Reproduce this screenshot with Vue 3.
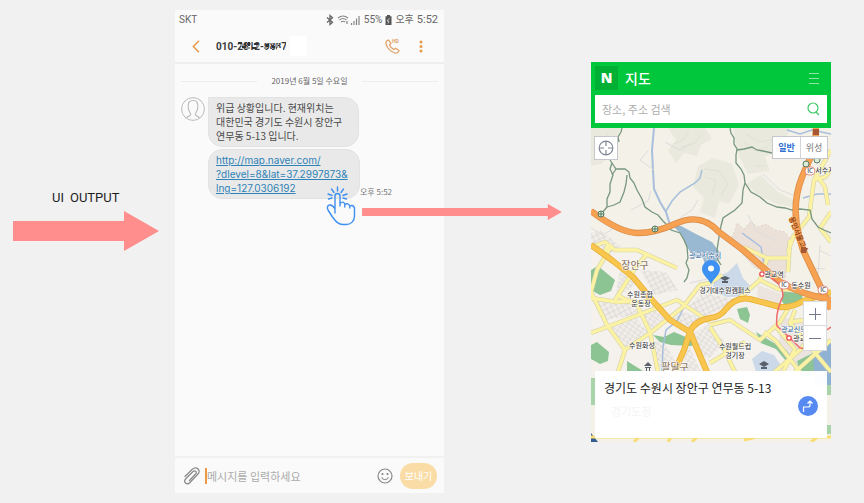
<script setup>
import { ref } from 'vue'

const draft = ref('')
const query = ref('')
const mapType = ref('normal')

const trails = [
  'M622 128 L621 132 L618 137 L619 142',
  'M610 160 L612 163 L616 169 L625 169 L629 172 L630 178 L634 183 L637 190 L642 199 L645 207 L652 212 L658 215 L663 221 L667 225 L671 230 L680 233 L684 240 L687 247 L688 258 L686 263 L689 270 L687 278 L684 282',
  'M612 163 L610 169 L613 175 L610 184 L610 192 L607 199 L607 207 L602 213',
  'M627 175 L626 184 L624 192 L620 202 L614 205 L607 207',
  'M612 175 L616 169',
  'M730 128 L731 133 L734 138 L734 144 L737 149 L736 155 L736 163 L741 169 L744 175 L745 183 L743 190 L742 203 L735 210 L723 218 L721 226 L719 237 L717 250 L718 260 L721 265',
  'M737 150 L744 149 L752 147 L757 150 L763 151 L772 153',
  'M745 183 L751 192 L760 197 L767 203 L777 207 L785 208 L792 210 L800 209 L810 210 L812 219 L818 227 L824 230 L831 233'
]

const localRoads = [
  'M612 245 L597 270 L591 292 L607 325 L625 350 L618 372',
  'M591 247 L605 242 L615 250 L637 250 L677 268',
  'M613 262 L605 251 L608 245',
  'M648 253 L636 267 L615 300',
  'M591 298 L617 302 L635 301 L650 332 L658 372',
  'M591 333 L607 327 L638 315 L677 300 L710 322',
  'M617 295 L638 306 L653 297',
  'M623 351 L650 333 L683 307 L700 285 L710 283 L722 275',
  'M743 247 L767 258 L790 258',
  'M790 240 L788 272',
  'M767 259 L760 280 L737 300',
  'M760 280 L778 289 L790 290',
  'M710 327 L724 349 L735 372',
  'M710 325 L730 320 L760 340 L780 322 L788 309',
  'M710 363 L745 342',
  'M764 332 L775 340 L800 372',
  'M776 327 L795 349 L783 372',
  'M790 322 L812 319 M795 310 L790 323 L831 372',
  'M831 340 L795 372 M771 375 L800 350 L820 325',
  'M831 150 L814 180 L809 217 L793 237 L788 252',
  'M812 169 L825 187 L828 205 M814 180 L825 177 L831 170',
  'M831 212 L820 228 L831 242'
]

const mainRoads = 'M591 245 L613 261 L633 277 L652 300 L670 320 L690 332 L707 372 M674 373 L684 350 L690 332 Q694 321 710 318 Q720 317 725 310 Q736 296 750 299 L780 307 Q792 308 803 301 L831 292'

const highways = [
  'M591 211 Q620 233 638 233 Q655 233 675 224 C692 216 706 218 719 232 L743 250 L775 278 Q792 292 831 300',
  'M816 128 L815 147 L802 177 Q791 205 799 236 L803 250 L823 292 L831 309'
]

const fineRoads = [
  'M654 170 L640 160 L648 151 M665 142 L680 150 L690 144',
  'M631 210 L648 201 L651 191 M680 218 L692 210 L698 200',
  'M763 174 L780 190 L793 195 M748 215 L756 231 L776 241',
  'M591 228 L603 235 L614 228 M690 283 L707 279',
  'M819 250 L831 256 M809 268 L825 269 M820 245 L818 275'
]

const places = [
  { text: '장안구', x: 635, y: 269, kind: 'district' },
  { text: '팔달구', x: 675, y: 371, kind: 'district' },
  { text: '수원종합', x: 640, y: 297, kind: 'place' },
  { text: '운동장', x: 641, y: 306, kind: 'place' },
  { text: '수원화성', x: 642, y: 348, kind: 'place' },
  { text: '광교저수지', x: 705, y: 258, kind: 'lake' },
  { text: '경기대수원캠퍼스', x: 725, y: 293, kind: 'place' },
  { text: '광교역', x: 774, y: 277, kind: 'place' },
  { text: '동수원', x: 801, y: 288, kind: 'place' },
  { text: '서수지', x: 825, y: 173, kind: 'place' },
  { text: '수원월드컵', x: 735, y: 349, kind: 'place' },
  { text: '경기장', x: 735, y: 358, kind: 'place' },
  { text: '광교신도시', x: 797, y: 332, kind: 'lake' },
  { text: '광교중앙', x: 806, y: 341, kind: 'place' }
]

const interchanges = [
  { x: 810, y: 171 },
  { x: 784, y: 285 },
  { x: 823, y: 290 }
]
</script>

<template>
  <main class="board">
    <section class="output">
      <p class="caption"><span>UI</span><span>OUTPUT</span></p>
      <svg class="big-arrow" viewBox="0 0 146 40" aria-hidden="true">
        <path d="M0 10 H111 V0 L146 20 L111 40 V30 H0 Z" fill="#ff8e8c" />
      </svg>
    </section>

    <section class="phone">
      <div class="status">
        <span>SKT</span>
        <span class="status-right">
          <svg width="8" height="12" viewBox="0 0 8 12" fill="none" stroke="#666" stroke-width="1.3"><path d="M1 3.5 L6.5 8.3 L4 10.5 V1.5 L6.5 3.7 L1 8.5" /></svg>
          <svg class="signal" width="24" height="12" viewBox="0 0 24 12" fill="none" stroke="#858585">
            <path d="M1 4 Q6 0 11 4 M2.5 6 Q6 3 9.5 6 M4 8 Q6 6.5 8 8" stroke-width="1.2" />
            <path d="M10 7 V10 M14.5 9 V11 M17 7 V11 M19.500 4.500 V11 M22 2 V11" stroke-width="1.2" />
          </svg>
          <span>55%</span>
          <svg width="7" height="12" viewBox="0 0 7 12"><path d="M2 1 H5 V2.300 H6.500 V11 H.5 V2.300 H2 Z" fill="#555" /><path d="M4.500 4 L2 7 H4 L3 9.500" stroke="#ddd" fill="none" stroke-width=".8" /></svg>
          <span>오후</span>
          <span class="clock">5:52</span>
        </span>
      </div>

      <header class="contact">
        <button class="plain" aria-label="뒤로">
          <svg width="8" height="13" viewBox="0 0 8 13" fill="none" stroke="#e49a4a" stroke-width="1.5"><path d="M7 .8 L1.300 6.500 L7 12.200" /></svg>
        </button>
        <svg class="number" width="70" height="14" viewBox="0 0 70 14">
          <text x="0" y="11">010-2812-9887</text>
          <g fill="#333"><path d="M22 3 H26 V5 H22 Z M26 7 H30 V9 H26 Z M32 3 H34 V7 H32 Z M36 8 H40 V10 H36 Z M38 4 H42 V6 H38 Z M50 5 H53 V8 H50 Z M56 7 H59 V9 H56 Z M28 4 H30 V6 H28 Z" /></g>
          <g fill="#999"><path d="M24 5 H28 V7 H24 Z M30 8 H34 V10 H30 Z M34 4 H36 V6 H34 Z M40 6 H43 V8 H40 Z M48 8 H51 V10 H48 Z M53 3 H57 V5 H53 Z M59 5 H62 V8 H59 Z" /></g>
          <g fill="#fafafa"><path d="M48 2 H64 V4 H48 Z M61 9 H67 V12 H61 Z M52 10 H56 V12 H52 Z" /></g>
        </svg>
        <span class="patch"></span>
        <button class="plain call" aria-label="HD 통화">
          <svg width="15" height="15" viewBox="0 0 15 15" fill="none" stroke="#e0a066" stroke-width="1.200">
            <path d="M3.500 1 C1.500 1.500 .6 3 1 5 C2 9 6 13 10 14 C12 14.400 14 13 14 11.500 L10.700 9.200 L8.800 10.500 C7 9.500 5.300 7.800 4.500 6 L6 4.500 Z" />
            <text class="hd" x="7" y="4">HD</text>
          </svg>
        </button>
        <button class="plain" aria-label="더보기">
          <svg width="4" height="13" viewBox="0 0 4 13" fill="#e49a4a"><circle cx="2" cy="2" r="1.500" /><circle cx="2" cy="6.500" r="1.500" /><circle cx="2" cy="11" r="1.500" /></svg>
        </button>
      </header>

      <div class="thread">
        <p class="date">2019년 6월 5일 수요일</p>
        <div class="message">
          <svg class="avatar" width="24" height="24" viewBox="0 0 24 24" fill="none" stroke="#bbb">
            <circle cx="12" cy="12" r="11.400" />
            <path d="M5.500 20.800 C7 19 9.500 19 9.700 17.500 C9.800 16 7.500 14.500 7.300 11 C6.500 5.500 8.500 3.500 12 3.500 S17.500 5.500 16.700 11 C16.500 14.500 14.200 16 14.300 17.500 C14.500 19 17 19 18.500 20.800" stroke-width="1.200" />
          </svg>
          <div class="bubbles">
            <p class="bubble first">위급 상황입니다. 현재위치는<br />대한민국 경기도 수원시 장안구<br />연무동 5-13 입니다.</p>
            <div class="link-row">
              <p class="bubble link">
                <a href="http://map.naver.com/?dlevel=8&lat=37.2997873&lng=127.0306192">http://map.naver.com/<br />?dlevel=8&amp;lat=37.2997873&amp;<br />lng=127.0306192</a>
                <svg class="tap" width="30" height="40" viewBox="0 0 30 40" fill="none" stroke="#3f8fef" stroke-width="1.400" stroke-linecap="round" stroke-linejoin="round">
                  <path d="M11.500 1 V5 M5.500 3 L8 6.500 M17.500 3 L15 6.500 M2 8 L6 9.500 M21 8 L17 9.500 M2.500 13 L6 12 M20.500 13 L17 12" />
                  <path d="M9 27 V10 Q9 7.500 11.500 7.500 T14 10 V20 M14 17.500 Q17.500 14.500 18.800 18 V21 M18.800 18.500 Q22 16.500 23.800 20 V22 M23.800 20 Q27.500 18.500 28.500 22 V30 C28.500 35 25 38.500 20 38.500 H17 C12 38.500 9.500 35 6.500 31 L2 24 C.5 21 2 18.500 4.500 19 C7 19.500 8 21 9 23" />
                </svg>
              </p>
              <time>오후 5:52</time>
            </div>
          </div>
        </div>
      </div>

      <form class="composer" @submit.prevent>
        <button class="plain" type="button" aria-label="첨부">
          <svg width="16" height="18" viewBox="0 0 16 18" fill="none" stroke="#888" stroke-width="1.200" stroke-linecap="round"><path d="M1 9.500 L8 2.500 Q11.500 -.5 14 2 T13.500 7.500 L6 15.500 Q3.500 18 1.500 16 T2 11.500 L8.800 4.800 Q10.500 3.300 11.800 4.500 T11.500 7 L5.500 13.500" /></svg>
        </button>
        <input v-model="draft" aria-label="메시지" placeholder="메시지를 입력하세요" />
        <button class="plain" type="button" aria-label="이모티콘">
          <svg width="16" height="16" viewBox="0 0 16 16" fill="none" stroke="#888" stroke-width="1.200"><circle cx="8" cy="8" r="7" /><path d="M4.500 9.500 Q8 14 11.500 9.500" /><circle cx="5.500" cy="6" r=".5" fill="#888" /><circle cx="10.500" cy="6" r=".5" fill="#888" /></svg>
        </button>
        <button class="send" type="submit">보내기</button>
      </form>
    </section>

    <section class="flow">
      <svg viewBox="0 0 199 16" aria-hidden="true"><path d="M0 4 H185 V0 L199 8 L185 16 V12 H0 Z" fill="#ff8e8c" /></svg>
    </section>

    <section class="map-app">
      <header class="map-head">
        <div class="brand">
          <span class="logo">N</span>
          <h1>지도</h1>
          <button class="plain" aria-label="메뉴">
            <svg width="10" height="12" viewBox="0 0 10 12" stroke="#8fe3a8"><path d="M0 1.500 H10 M0 6.500 H10 M0 11.500 H10" /></svg>
          </button>
        </div>
        <form class="search" @submit.prevent>
          <input v-model="query" aria-label="검색" placeholder="장소, 주소 검색" />
          <button class="plain" aria-label="검색하기">
            <svg width="13" height="14" viewBox="0 0 13 14" fill="none" stroke="#3cc966" stroke-width="1.200"><circle cx="6" cy="6" r="5" /><path d="M9 10 L12 13" /></svg>
          </button>
        </form>
      </header>

      <div class="map">
        <svg class="tiles" viewBox="591 128 240 314" preserveAspectRatio="xMidYMid slice">
          <defs>
            <pattern id="blocks" width="5" height="5" patternUnits="userSpaceOnUse" patternTransform="rotate(-27)">
              <rect width="5" height="5" fill="#f0ede9" /><path d="M0 0 H5 M0 0 V5" stroke="#cfcccb" stroke-width="1" />
            </pattern>
            <pattern id="blocks-steep" width="5" height="4" patternUnits="userSpaceOnUse" patternTransform="rotate(35)">
              <rect width="5" height="4" fill="#f1eeea" /><path d="M0 0 H5 M0 0 V4" stroke="#d3d0ce" stroke-width="1" />
            </pattern>
          </defs>
          <rect x="591" y="128" width="240" height="314" fill="#f4f1e8" />
          <g fill="#e9eadd">
            <path d="M591 128 H620 L617 143 L611 148 L609 157 L601 164 L591 166 Z" />
            <path d="M668 128 H705 L712 139 L701 145 L697 156 L684 153 L676 163 L668 150 L676 140 Z" />
            <path d="M698 166 L713 158 L732 164 L739 185 L729 204 L719 201 L715 218 L700 212 L704 198 L693 187 Z" />
            <path d="M733 128 H790 L784 145 L765 157 L770 171 L748 174 L738 154 Z" />
            <path d="M746 184 L761 175 L778 192 L793 200 V207 L777 204 L757 195 Z" />
          </g>
          <g fill="none" stroke="#dfe1d3" stroke-width="1">
            <path d="M595 148 L604 144 L608 134 M674 144 L683 140 L689 132 M682 147 L695 143 L702 134 M704 169 L719 171 L728 184 L721 196 M705 177 L716 181 L712 194 M746 134 L758 142 L779 139 M744 142 L755 151 L768 147 M755 166 L765 166" />
          </g>
          <path d="M591 230 L605 235 L622 247 L650 249 L676 264 L699 279 L694 305 L704 320 L720 310 L742 300 L773 306 L790 322 L831 308 V378 H591 Z" fill="#f5f2ed" />
          <path d="M591 233 L600 230 L620 246 L606 257 L591 247 Z M605 320 L590 297 L604 300 L628 301 L639 314 Z M640 270 L666 272 L678 290 L654 295 Z M684 312 L703 319 L690 329 L667 320 Z M702 293 L728 298 L740 301 L717 311 L703 318 L689 306 Z" fill="url(#blocks)" />
          <path d="M609 329 L636 318 L648 332 L626 347 Z M639 312 L657 304 L667 315 L652 329 Z M656 339 L666 345 L675 361 L662 373 L653 345 Z M693 334 L710 323 L724 342 L710 358 L700 356 Z M688 344 L702 374 L680 374 Z M620 271 L636 284 L615 299 Z" fill="url(#blocks-steep)" />
          <path d="M731 241 L737 223 L744 229 L751 221 L757 227 L766 224 L775 230 L785 232 L791 240 L787 260 L785 279 L755 268 Z" fill="#ece1d9" stroke="#cdb5a1" stroke-width=".8" stroke-dasharray="1 3" />
          <path d="M781 318 L809 318 L817 350 L796 372 L779 342 Z M758 285 L781 294 L781 311 L757 299 Z" fill="#ece4de" />
          <g fill="#8cc494">
            <path d="M591 270 L598 266 L615 280 L611 291 L600 295 L591 290 Z M591 345 L597 342 L609 352 L608 361 L600 364 L591 359 Z M627 361 L643 371 L627 373 Z" />
            <path d="M653 335 L664 337 L674 332 L693 340 L692 346 L671 345 L660 342 Z M737 309 L747 307 L750 315 L748 323 L740 319 Z" />
            <path d="M784 291 L802 294 L803 302 L786 307 L781 300 Z M756 332 L774 343 L786 350 L791 356 L786 361 L776 349 L761 343 Z M797 361 L817 351 L813 376 H801 Z" />
          </g>
          <path d="M672 225 L681 226 L694 233 L712 242 L721 254 L716 263 L717 271 L711 276 L706 268 L703 258 L693 256 L687 247 L681 234 Z" fill="#99b8d2" />
          <g fill="#cbd9e9"><path d="M715 278 L728 272 L737 263 L743 278 L752 288 L746 296 L727 297 L712 291 Z M752 359 L762 351 L774 355 L780 364 L776 375 H757 Z" /><path d="M813 357 L824 350 L831 339 V385 H815 Z" fill="#8fb1d2" /></g>
          <g fill="none" stroke="#a7bfdc" stroke-width="1.500">
            <path d="M654 128 L652 150 L653 170 L654 189 L660 202 L666 212 L670 225" stroke-width="2" /><path d="M702 170 L700 178 L695 183 L680 192 L672 201 L666 211" /><path d="M787 130 L800 134 L812 130 L831 134 M742 233 L761 247 L765 271 M684 307 L677 321 L666 330 L663 347 L662 372" /><path d="M803 198 L817 194 L831 194" />
          </g>
          <g fill="none" stroke="#dcdcdd" stroke-width="1"><path v-for="d in fineRoads" :key="d" :d="d" /></g>
          <g fill="none" stroke="#d5d1a7" stroke-width="4.500" stroke-linejoin="round"><path v-for="d in localRoads" :key="d" :d="d" /></g>
          <g fill="none" stroke="#fbf3a3" stroke-width="3.300" stroke-linejoin="round"><path v-for="d in localRoads" :key="d" :d="d" /></g>
          <g fill="none" stroke="#78977f" stroke-width="1.300"><path v-for="d in trails" :key="d" :d="d" /></g>
          <g fill="none" stroke-linejoin="round">
            <path :d="mainRoads" stroke="#e7ad35" stroke-width="6" />
            <path :d="mainRoads" stroke="#f8c54d" stroke-width="4.500" />
            <g stroke="#d88b48" stroke-width="6.500"><path v-for="d in highways" :key="d" :d="d" /></g>
            <g stroke="#f7a152" stroke-width="5"><path v-for="d in highways" :key="d" :d="d" /></g>
            <path d="M762 274 Q783 281 783 296 Q775 313 777 326 L789 337 L800 348 Q815 350 822 333 L831 327" stroke="#ef6b6b" stroke-width="1.500" />
          </g>
          <g fill="#fff" stroke="#ec4c52" stroke-width="1.300"><circle cx="762" cy="274" r="2.200" /><circle cx="789" cy="338" r="2.200" /></g>
          <g fill="#dcebd9" stroke="#567b61"><circle cx="601" cy="214" r="3" /><circle cx="655" cy="229" r="3" /><circle cx="806" cy="164" r="3" /><circle cx="817" cy="160" r="3" /><path d="M598 214 H604 M601 211 V217 M652 229 H658 M655 226 V232" /></g>
          <g v-for="p in interchanges" :key="p.x"><rect :x="p.x - 5" :y="p.y - 4" width="10" height="8" rx="4" fill="#fff" stroke="#d77672" stroke-width=".8" /><text class="ic" :x="p.x" :y="p.y + 2">IC</text></g>
          <text v-for="p in places" :key="p.text" :class="p.kind" :x="p.x" :y="p.y">{{ p.text }}</text>
          <text class="road" transform="translate(789 218) rotate(68)">용인서울고속</text>
          <path d="M813 129 H819 V135 H813 Z M801 247 H806 V253 H801 Z" fill="#a65733" />
          <g fill="#59616c"><path d="M720 278 L725 276 L730 278 L725 281 Z M722 281 H728 V283 H722 Z M759 364 L764 361 L769 364 L764 367 Z M761 367 H767 V369 H761 Z M644 366 L648 362 L652 366 Z M645 367 H651 V368 H645 Z M646 368 H647 V371 H646 Z M649 368 H650 V371 H649 Z" /></g>
          <path d="M711 284 C708 278 702 275 702 269 A9 9 0 0 1 720 269 C720 275 714 278 711 284 Z" fill="#3c91f2" /><circle cx="711" cy="268.500" r="3" fill="#fff" />
          <path d="M591 433 L598 442 H591 Z" fill="#355c91" />
          <path d="M591 437 H831 M634 442 L646 430 M668 442 L674 432 M692 442 L702 432 M744 440 L765 435 M811 442 L824 432" stroke="#f8dd74" stroke-width="3" />
          <path d="M591 378 H596 V405 H591 Z M826 385 H831 V395 H826 Z M826 425 H831 V434 H826 Z" fill="#a9d3a8" />
        </svg>

        <div class="controls">
          <button class="locate" aria-label="현재 위치">
            <svg width="16" height="16" viewBox="0 0 16 16" fill="none" stroke="#808796" stroke-width="1.200"><circle cx="8" cy="8" r="6.800" /><path d="M8 1 V6 M8 10 V15 M1 8 H6 M10 8 H15" /></svg>
          </button>
          <div class="types">
            <button :class="{ active: mapType === 'normal' }" @click="mapType = 'normal'">일반</button>
            <button :class="{ active: mapType === 'satellite' }" @click="mapType = 'satellite'">위성</button>
          </div>
        </div>

        <div class="bottom">
          <div class="zoom">
            <button aria-label="확대"><svg width="12" height="12" viewBox="0 0 12 12" stroke="#737b8b"><path d="M0 6.500 H12 M6.500 0 V12" /></svg></button>
            <button aria-label="축소"><svg width="12" height="12" viewBox="0 0 12 12" stroke="#737b8b"><path d="M0 6.500 H12" /></svg></button>
          </div>
          <div class="place-card">
            <div>
              <h2>경기도 수원시 장안구 연무동 5-13</h2>
              <p class="ghost">경기도청</p>
            </div>
            <button class="route" aria-label="길찾기">
              <svg width="12" height="14" viewBox="0 0 12 14" fill="none" stroke="#fff" stroke-width="1.200"><path d="M1.500 13 V8 H6 Q8 8 8 6 V2 M5.500 4.500 L8 2 L10.500 4.500" /></svg>
            </button>
          </div>
        </div>
      </div>
    </section>
  </main>
</template>

<style>
body {
  background: #f1f1f1;
}
</style>

<style scoped>
* {
  box-sizing: border-box;
}

.board {
  display: grid;
  grid-template-columns: 175fr 269fr 147fr 240fr 33fr;
  align-items: start;
  min-height: 100vh;
  padding: 10px 0;
  font-family: "Noto Sans CJK KR", sans-serif;
}

p, h1, h2 {
  margin: 0;
}

svg {
  display: block;
}

button {
  padding: 0;
  border: 0;
  font: inherit;
  display: grid;
  place-items: center;
}

.plain {
  background: none;
}

.output {
  padding: 180px 16px 0 13px;
}

.caption {
  display: flex;
  gap: 6px;
  padding-left: 39px;
  font: 13px/16px Roboto, sans-serif;
  color: #1e1e1e;
}

.big-arrow {
  width: 100%;
  margin-top: 5px;
}

.phone {
  display: flex;
  flex-direction: column;
  min-height: calc(100vh - 20px);
  background: #fafafa;
  color: #4a4a4a;
}

.status {
  display: flex;
  justify-content: space-between;
  padding: 2px 6px 2px 4px;
  font: 10px/16px Roboto, "Noto Sans CJK KR", sans-serif;
  color: #666;
}

.status-right {
  display: flex;
  align-items: center;
  gap: 3px;
}

.clock {
  font-size: 11px;
}

.contact {
  display: flex;
  align-items: center;
  height: 34px;
  padding: 0 21px 0 17px;
  border-bottom: 2px solid #efefef;
}

.number {
  margin-left: 16px;
  font: 700 10px Roboto, sans-serif;
  fill: #3a3a3a;
}

.hd {
  font: 700 5px Roboto, sans-serif;
  fill: #e0a066;
  stroke: none;
}

.patch {
  width: 17px;
  height: 20px;
  margin-left: 4px;
  background: #fff;
}

.call {
  margin-left: auto;
  margin-right: 19px;
}

.thread {
  flex: 1;
  padding: 10px 6px;
}

.date {
  display: flex;
  align-items: center;
  gap: 14px;
  font-size: 8px;
  line-height: 14px;
  color: #666;
}

.date::before,
.date::after {
  content: "";
  flex: 1;
  height: 1px;
  background: #ededed;
}

.message {
  display: flex;
  gap: 3px;
  padding-top: 9px;
}

.avatar {
  flex: none;
}

.bubbles {
  display: flex;
  flex-direction: column;
  align-items: flex-start;
  gap: 2px;
}

.bubble {
  padding: 3px 7px;
  border: 1px solid #e2e2e2;
  border-radius: 14px;
  background: #e9e9e9;
  font-size: 10px;
  line-height: 14px;
  white-space: nowrap;
}

.first {
  width: 151px;
  border-top-left-radius: 0;
}

.link-row {
  display: flex;
  align-items: flex-end;
}

.link {
  position: relative;
  width: 152px;
  font-family: Inter, sans-serif;
}

.link a {
  color: #2f83b7;
}

.tap {
  position: absolute;
  right: 3px;
  bottom: -28px;
}

time {
  font-size: 8px;
  line-height: 14px;
  white-space: nowrap;
  color: #777;
}

.composer {
  display: flex;
  align-items: center;
  height: 37px;
  padding: 0 7px 0 9px;
  border-top: 2px solid #f1f1f1;
}

.composer input {
  flex: 1;
  min-width: 0;
  height: 16px;
  margin-left: 5px;
  padding: 0;
  border: 0;
  border-left: 2px solid #ec9b45;
  background: none;
  font: 11px/16px "Noto Sans CJK KR", sans-serif;
  outline: none;
}

.composer input::placeholder {
  color: #aaa;
  opacity: 1;
}

.send {
  width: 37px;
  height: 26px;
  margin-left: 7px;
  border-radius: 13px;
  background: #f9dca6;
  color: #fff;
  font-size: 10px;
}

.flow {
  position: relative;
  z-index: 1;
}

.flow svg {
  position: absolute;
  right: 20%;
  top: 194px;
  width: 136%;
}

.map-app {
  display: flex;
  flex-direction: column;
  margin-top: 52px;
  min-height: 380px;
}

.map-head {
  padding: 4px 4px 5px;
  background: #00c73c;
}

.brand {
  display: flex;
  align-items: center;
  gap: 7px;
  padding-right: 8px;
}

.brand .plain {
  margin-left: auto;
}

.logo {
  display: grid;
  place-items: center;
  width: 23px;
  height: 24px;
  background: #00b035;
  color: #fff;
  font: 900 14px/24px "Noto Sans", sans-serif;
}

.brand h1 {
  font-size: 14px;
  line-height: 24px;
  font-weight: 500;
  color: #fff;
}

.search {
  display: flex;
  align-items: center;
  height: 28px;
  margin-top: 5px;
  padding: 0 7px;
  background: #fff;
}

.search input {
  flex: 1;
  min-width: 0;
  padding: 0;
  border: 0;
  background: none;
  font: 11px/20px "Noto Sans CJK KR", sans-serif;
  outline: none;
}

.search input::placeholder {
  color: #adadad;
  opacity: 1;
}

.map {
  flex: 1;
  display: grid;
  grid-template-columns: 100%;
  grid-template-rows: 314px;
}

.map > * {
  grid-area: 1 / 1;
}

.tiles {
  width: 100%;
  height: 314px;
}

.tiles text {
  font-size: 7px;
  font-weight: 500;
  text-anchor: middle;
  fill: #444;
  stroke: #fff;
  stroke-width: 1px;
  paint-order: stroke;
}

.tiles .district {
  font-size: 10px;
  fill: #937f6c;
}

.tiles .lake {
  fill: #44719f;
}

.tiles .ic {
  font-size: 6px;
  stroke: none;
}

.tiles .road {
  font-size: 7px;
  text-anchor: start;
  fill: #7d3414;
  stroke: #f7a152;
}

.controls {
  z-index: 1;
  display: flex;
  align-items: flex-start;
  justify-content: space-between;
  padding: 8px 3px;
}

.locate {
  width: 24px;
  height: 24px;
  border: 1px solid #c5c7cd;
  background: #fff;
}

.types {
  display: flex;
  border: 1px solid #c5c7cd;
  background: #fff;
  font-size: 9px;
  line-height: 21px;
}

.types button {
  width: 27px;
  background: #fff;
  color: #777;
}

.types button + button {
  border-left: 1px solid #d4d5d9;
}

.types .active {
  color: #2f70d0;
  font-weight: 700;
}

.bottom {
  z-index: 1;
  align-self: end;
  padding: 0 4px 4px;
}

.zoom {
  width: 24px;
  margin: 0 0 20px auto;
  background: #fff;
}

.zoom button {
  width: 24px;
  height: 25px;
  border: 1px solid #d8dade;
  background: #fff;
}

.zoom button + button {
  border-top: 0;
}

.place-card {
  display: flex;
  justify-content: space-between;
  height: 67px;
  padding: 8px 9px;
  background: rgba(255, 255, 255, .97);
}

.place-card h2 {
  font-size: 12px;
  line-height: 18px;
  font-weight: 400;
  white-space: nowrap;
  color: #222;
}

.ghost {
  padding: 6px 7px;
  font-size: 11px;
  line-height: 16px;
  color: #f5f5f5;
}

.route {
  align-self: center;
  width: 20px;
  height: 20px;
  margin-top: 2px;
  border-radius: 50%;
  background: #568af2;
}
</style>
